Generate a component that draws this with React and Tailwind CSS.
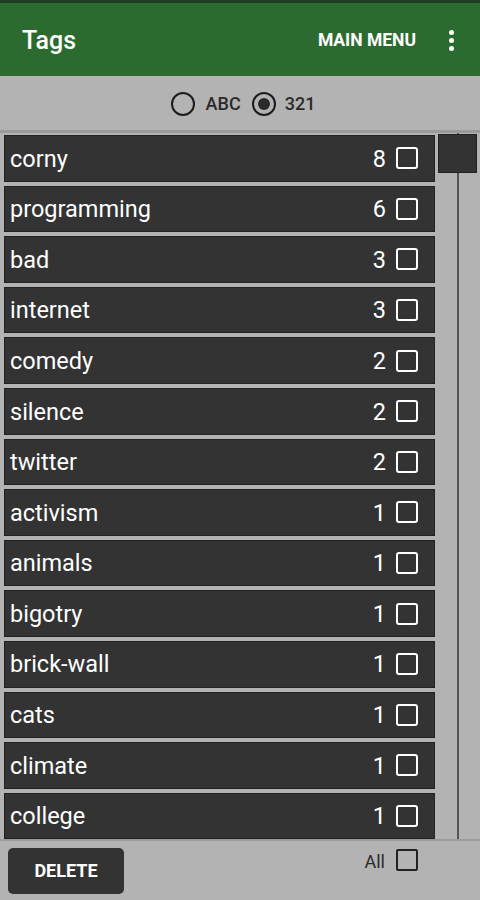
import { useState } from "react";

const tags = [
  ["corny", 8],
  ["programming", 6],
  ["bad", 3],
  ["internet", 3],
  ["comedy", 2],
  ["silence", 2],
  ["twitter", 2],
  ["activism", 1],
  ["animals", 1],
  ["bigotry", 1],
  ["brick-wall", 1],
  ["cats", 1],
  ["climate", 1],
  ["college", 1],
];

export default function App() {
  const [sort, setSort] = useState("count");

  return (
    <div
      className="w-[480px] h-[900px] flex flex-col bg-[#b3b3b3] overflow-hidden"
      style={{ fontFamily: "Roboto, 'Noto Sans', sans-serif" }}
    >
      {/* header */}
      <header className="h-[76px] shrink-0 border-t-[3px] border-[#1f3d21] bg-[#2c6b2f] flex items-center pl-[22px] pr-[26px] pt-[2px] text-white">
        <h1 className="text-[25px] font-medium flex-1">Tags</h1>
        <button className="text-[17.5px] font-bold leading-none mr-[32px]">MAIN MENU</button>
        <div className="flex flex-col gap-[3px] items-center w-[6px]">
          <span className="w-[5px] h-[5px] rounded-full bg-white" />
          <span className="w-[5px] h-[5px] rounded-full bg-white" />
          <span className="w-[5px] h-[5px] rounded-full bg-white" />
        </div>
      </header>

      {/* sort */}
      <div className="h-[54px] shrink-0 flex items-center justify-center gap-[11px] pl-[6px] pt-[2px] text-[18px] font-medium leading-none text-[#2a2a2a]">
        <button onClick={() => setSort("abc")} className="flex items-center gap-[11px]">
          <span className="w-[24px] h-[24px] rounded-full border-2 border-[#1c1c1c] flex items-center justify-center">
            {sort === "abc" && <span className="w-[12px] h-[12px] rounded-full bg-[#2a2a2a]" />}
          </span>
          ABC
        </button>
        <button onClick={() => setSort("count")} className="flex items-center gap-[9px]">
          <span className="w-[24px] h-[24px] rounded-full border-2 border-[#1c1c1c] flex items-center justify-center">
            {sort === "count" && <span className="w-[12px] h-[12px] rounded-full bg-[#2a2a2a]" />}
          </span>
          321
        </button>
      </div>

      {/* list */}
      <div className="flex-1 min-h-0 flex border-t-[3px] border-b-2 border-[#9a9a9a]">
        <div className="w-[437px] overflow-hidden pl-[4px] pt-[2px] flex flex-col gap-[4px]">
          {tags.map(([name, count]) => (
            <div
              key={name}
              className="w-[431px] h-[46.6px] shrink-0 bg-[#333333] border border-[#222] flex items-center pl-[5px] pr-[16px] pt-[2px] text-white text-[23.5px] leading-none"
            >
              <span className="flex-1">{name}</span>
              <span className="mr-[10px]">{count}</span>
              <span className="w-[22px] h-[22px] -mt-[2px] rounded-[3px] border-2 border-white" />
            </div>
          ))}
        </div>
        <div className="flex-1 relative">
          <div className="absolute left-[20px] top-0 bottom-0 w-[2px] bg-[#555]" />
          <div className="absolute left-[1px] top-[1px] w-[39px] h-[39px] bg-[#333333] border border-[#222]" />
        </div>
      </div>

      {/* bottom */}
      <div className="h-[59px] shrink-0 flex items-start pl-[8px] pr-[62px] pt-[7px]">
        <button className="w-[116px] h-[46px] rounded-[5px] bg-[#333333] text-white text-[18px] font-bold leading-none">
          DELETE
        </button>
        <div className="flex-1" />
        <span className="text-[18px] leading-none text-[#2a2a2a] mt-[5px] mr-[11px]">All</span>
        <span className="w-[22px] h-[22px] mt-[1px] rounded-[2px] border-2 border-[#222]" />
      </div>
    </div>
  );
}
